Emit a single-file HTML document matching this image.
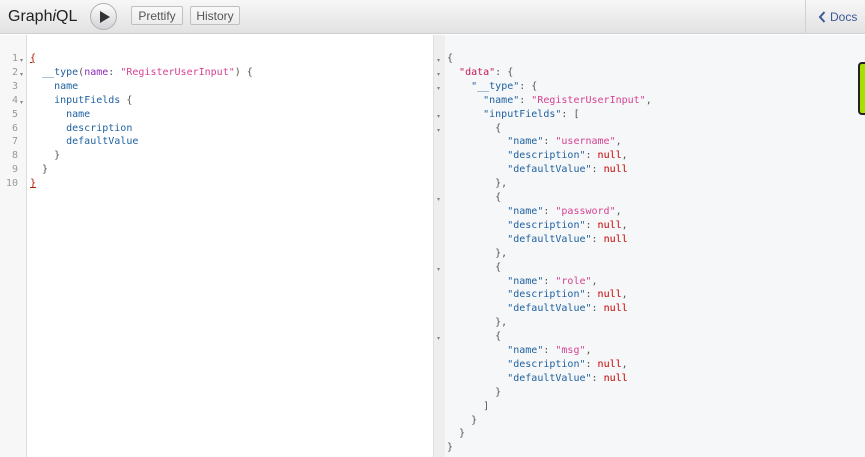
<!DOCTYPE html>
<html><head><meta charset="utf-8"><style>
*{margin:0;padding:0;box-sizing:border-box}
body{width:865px;height:457px;overflow:hidden;font-family:"Liberation Sans",sans-serif;background:#fff;position:relative}
.top{position:absolute;left:0;top:0;width:865px;height:34px;background:linear-gradient(#f7f7f7,#e2e2e2);border-bottom:1px solid #d0d0d0}
.title{position:absolute;left:8px;top:8px;font-size:16px;color:#222}
.run{position:absolute;left:90px;top:3px;width:27px;height:27px;border-radius:50%;border:1px solid #b0b0b0;background:linear-gradient(#fdfdfd,#d2d3d6)}
.run:after{content:"";position:absolute;left:9px;top:7px;border-left:10px solid #333;border-top:6px solid transparent;border-bottom:6px solid transparent}
.btn{position:absolute;top:6px;height:19px;border:1px solid #c0c0c0;border-radius:2px;background:linear-gradient(#f9f9f9,#ececec);font-size:12px;color:#555;padding-top:2px;text-align:center}
.docs{position:absolute;left:805px;top:0;width:60px;height:34px;border-left:1px solid #d0d0d0;color:#3b5998;font-size:12px;padding:10px 0 0 24px}
.docs svg{position:absolute;left:12px;top:11px}
.gut{position:absolute;left:0;top:35px;width:27px;height:422px;background:#f7f7f7;border-right:1px solid #ddd}
.code{position:absolute;font-family:"DejaVu Sans Mono",monospace;font-size:10px;line-height:13.9px;white-space:pre;color:#555}
.ln{color:#999;text-align:right}
.k{color:#1f61a0}.a{color:#8b2bb9}.s{color:#d64292}.n{color:#c80000}.b{color:#555}
.right{position:absolute;left:433px;top:35px;width:432px;height:422px;background:#f6f7f8;border-left:1px solid #e0e0e0}
.rg{position:absolute;left:434px;top:35px;width:11px;height:422px;background:#eeeeef}
.tri{position:absolute;font-size:6px;color:#888}
.green{position:absolute;left:858px;top:62px;width:12px;height:53px;background:#a4e000;border:2px solid #222;border-radius:4px}
</style></head><body>
<div class="top">
<div class="title">Graph<i>i</i>QL</div>
<div class="run"></div>
<div class="btn" style="left:131px;width:52px">Prettify</div>
<div class="btn" style="left:190px;width:50px">History</div>
<div class="docs"><svg width="8" height="12" viewBox="0 0 8 12"><path d="M6.5 1L2 6l4.5 5" stroke="#3b5998" stroke-width="2" fill="none"/></svg>Docs</div>
</div>
<div class="gut"></div>
<div class="code ln" style="left:0;top:52px;width:18px">1
2
3
4
5
6
7
8
9
10</div>
<div class="tri" style="left:20px;top:55px;line-height:13.9px">▾<br>▾<br><br>▾</div>
<div class="code" style="left:30px;top:52px"><span style="text-decoration:underline;color:#b11a04">{</span>
  <span class="k">__type</span>(<span class="a">name</span>: <span class="s">"RegisterUserInput"</span>) {
    <span class="k">name</span>
    <span class="k">inputFields</span> {
      <span class="k">name</span>
      <span class="k">description</span>
      <span class="k">defaultValue</span>
    }
  }
<span style="text-decoration:underline;color:#b11a04">}</span></div>
<div class="right"></div>
<div class="rg"></div>
<div class="tri" style="left:437px;top:55px;line-height:13.9px">▾<br>▾<br>▾<br><br>▾<br>▾<br><br><br><br><br>▾<br><br><br><br><br>▾<br><br><br><br><br>▾</div>
<div class="code" style="left:447px;top:52px">{
  <span class="s" style="color:#c41a5b">"data"</span>: {
    <span class="k">"__type"</span>: {
      <span class="k">"name"</span>: <span class="s">"RegisterUserInput"</span>,
      <span class="k">"inputFields"</span>: [
        {
          <span class="k">"name"</span>: <span class="s">"username"</span>,
          <span class="k">"description"</span>: <span class="n">null</span>,
          <span class="k">"defaultValue"</span>: <span class="n">null</span>
        },
        {
          <span class="k">"name"</span>: <span class="s">"password"</span>,
          <span class="k">"description"</span>: <span class="n">null</span>,
          <span class="k">"defaultValue"</span>: <span class="n">null</span>
        },
        {
          <span class="k">"name"</span>: <span class="s">"role"</span>,
          <span class="k">"description"</span>: <span class="n">null</span>,
          <span class="k">"defaultValue"</span>: <span class="n">null</span>
        },
        {
          <span class="k">"name"</span>: <span class="s">"msg"</span>,
          <span class="k">"description"</span>: <span class="n">null</span>,
          <span class="k">"defaultValue"</span>: <span class="n">null</span>
        }
      ]
    }
  }
}</div>
<div class="green"></div>
</body></html>
